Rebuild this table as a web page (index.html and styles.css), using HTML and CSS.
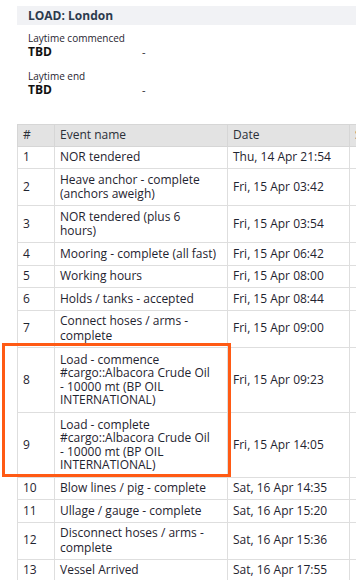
FILE: index.html
```html
<!DOCTYPE html>
<html>
<head>
<meta charset="utf-8">
<link rel="stylesheet" href="styles.css">
</head>
<body>
<div class="page">
  <div class="section-title">LOAD: London</div>
  <div class="fields">
    <div class="field">
      <div class="label">Laytime commenced</div>
      <div class="field-row"><span class="value">TBD</span><span class="dash">-</span></div>
    </div>
    <div class="field">
      <div class="label">Laytime end</div>
      <div class="field-row"><span class="value">TBD</span><span class="dash">-</span></div>
    </div>
  </div>
  <div class="table-wrap">
    <table class="events">
      <colgroup>
        <col class="c-num"><col class="c-name"><col class="c-date"><col class="c-extra">
      </colgroup>
      <thead>
        <tr><th>#</th><th>Event name</th><th>Date</th><th>Source</th></tr>
      </thead>
      <tbody>
        <tr><td>1</td><td class="name">NOR tendered</td><td>Thu, 14 Apr 21:54</td><td></td></tr>
        <tr><td>2</td><td class="name">Heave anchor - complete (anchors aweigh)</td><td>Fri, 15 Apr 03:42</td><td></td></tr>
        <tr><td>3</td><td class="name">NOR tendered (plus 6 hours)</td><td>Fri, 15 Apr 03:54</td><td></td></tr>
        <tr><td>4</td><td class="name">Mooring - complete (all fast)</td><td>Fri, 15 Apr 06:42</td><td></td></tr>
        <tr><td>5</td><td class="name">Working hours</td><td>Fri, 15 Apr 08:00</td><td></td></tr>
        <tr><td>6</td><td class="name">Holds / tanks - accepted</td><td>Fri, 15 Apr 08:44</td><td></td></tr>
        <tr><td>7</td><td class="name">Connect hoses / arms - complete</td><td>Fri, 15 Apr 09:00</td><td></td></tr>
        <tr class="long"><td>8</td><td class="name">Load - commence<br>#cargo::Albacora Crude Oil<br>- 10000 mt (BP OIL<br>INTERNATIONAL)</td><td>Fri, 15 Apr 09:23</td><td></td></tr>
        <tr class="long"><td>9</td><td class="name">Load - complete<br>#cargo::Albacora Crude Oil<br>- 10000 mt (BP OIL<br>INTERNATIONAL)</td><td>Fri, 15 Apr 14:05</td><td></td></tr>
        <tr><td>10</td><td class="name">Blow lines / pig - complete</td><td>Sat, 16 Apr 14:35</td><td></td></tr>
        <tr><td>11</td><td class="name">Ullage / gauge - complete</td><td>Sat, 16 Apr 15:20</td><td></td></tr>
        <tr><td>12</td><td class="name">Disconnect hoses / arms - complete</td><td>Sat, 16 Apr 15:36</td><td></td></tr>
        <tr><td>13</td><td class="name">Vessel Arrived</td><td>Sat, 16 Apr 17:55</td><td></td></tr>
      </tbody>
    </table>
  </div>
  <div class="highlight"></div>
</div>
</body>
</html>
```

FILE: styles.css
```css
html, body {
  margin: 0;
  padding: 0;
  background: #ffffff;
}

body {
  font-family: "Open Sans", "DejaVu Sans", sans-serif;
  color: #1f2430;
}

.page {
  position: relative;
  width: 356px;
  height: 580px;
  overflow: hidden;
  box-sizing: border-box;
  padding: 6px 0 0 17px;
}

.section-title {
  height: 19px;
  line-height: 19px;
  background: #f1f2f5;
  padding-left: 11px;
  font-size: 12px;
  font-weight: 700;
  color: #2c3a4d;
}

.fields {
  padding: 7px 0 0 11px;
  display: flex;
  flex-direction: column;
  gap: 11px;
}

.label {
  font-size: 10px;
  line-height: 13px;
  color: #1f2430;
}

.field-row {
  display: grid;
  grid-template-columns: 114px auto;
  align-items: center;
}

.value {
  font-size: 12px;
  line-height: 14px;
  font-weight: 700;
  color: #111;
}

.dash {
  font-size: 11px;
  line-height: 14px;
}

.table-wrap {
  margin-top: 27px;
  width: 452px;
}

.events {
  border-collapse: collapse;
  table-layout: fixed;
  width: 452px;
  font-size: 12px;
  line-height: 14.5px;
}

.c-num { width: 37px; }
.c-name { width: 173px; }
.c-date { width: 122px; }
.c-extra { width: 120px; }

.events th {
  background: #e3e3e3;
  font-weight: 400;
  text-align: left;
  padding: 3px 5px;
  border: 1px solid #d6d6d6;
  color: #2a2f38;
}

.events td {
  padding: 3.5px 5px;
  border: 1px solid #dedede;
  vertical-align: middle;
  color: #1f2430;
}

.events td.name {
  padding-right: 10px;
}

.events tr.long td {
  line-height: 13.5px;
  padding-top: 5px;
  padding-bottom: 5px;
}

.highlight {
  position: absolute;
  left: 2px;
  top: 343px;
  width: 229px;
  height: 134px;
  box-sizing: border-box;
  border: 3px solid #ff5a14;
}
```
